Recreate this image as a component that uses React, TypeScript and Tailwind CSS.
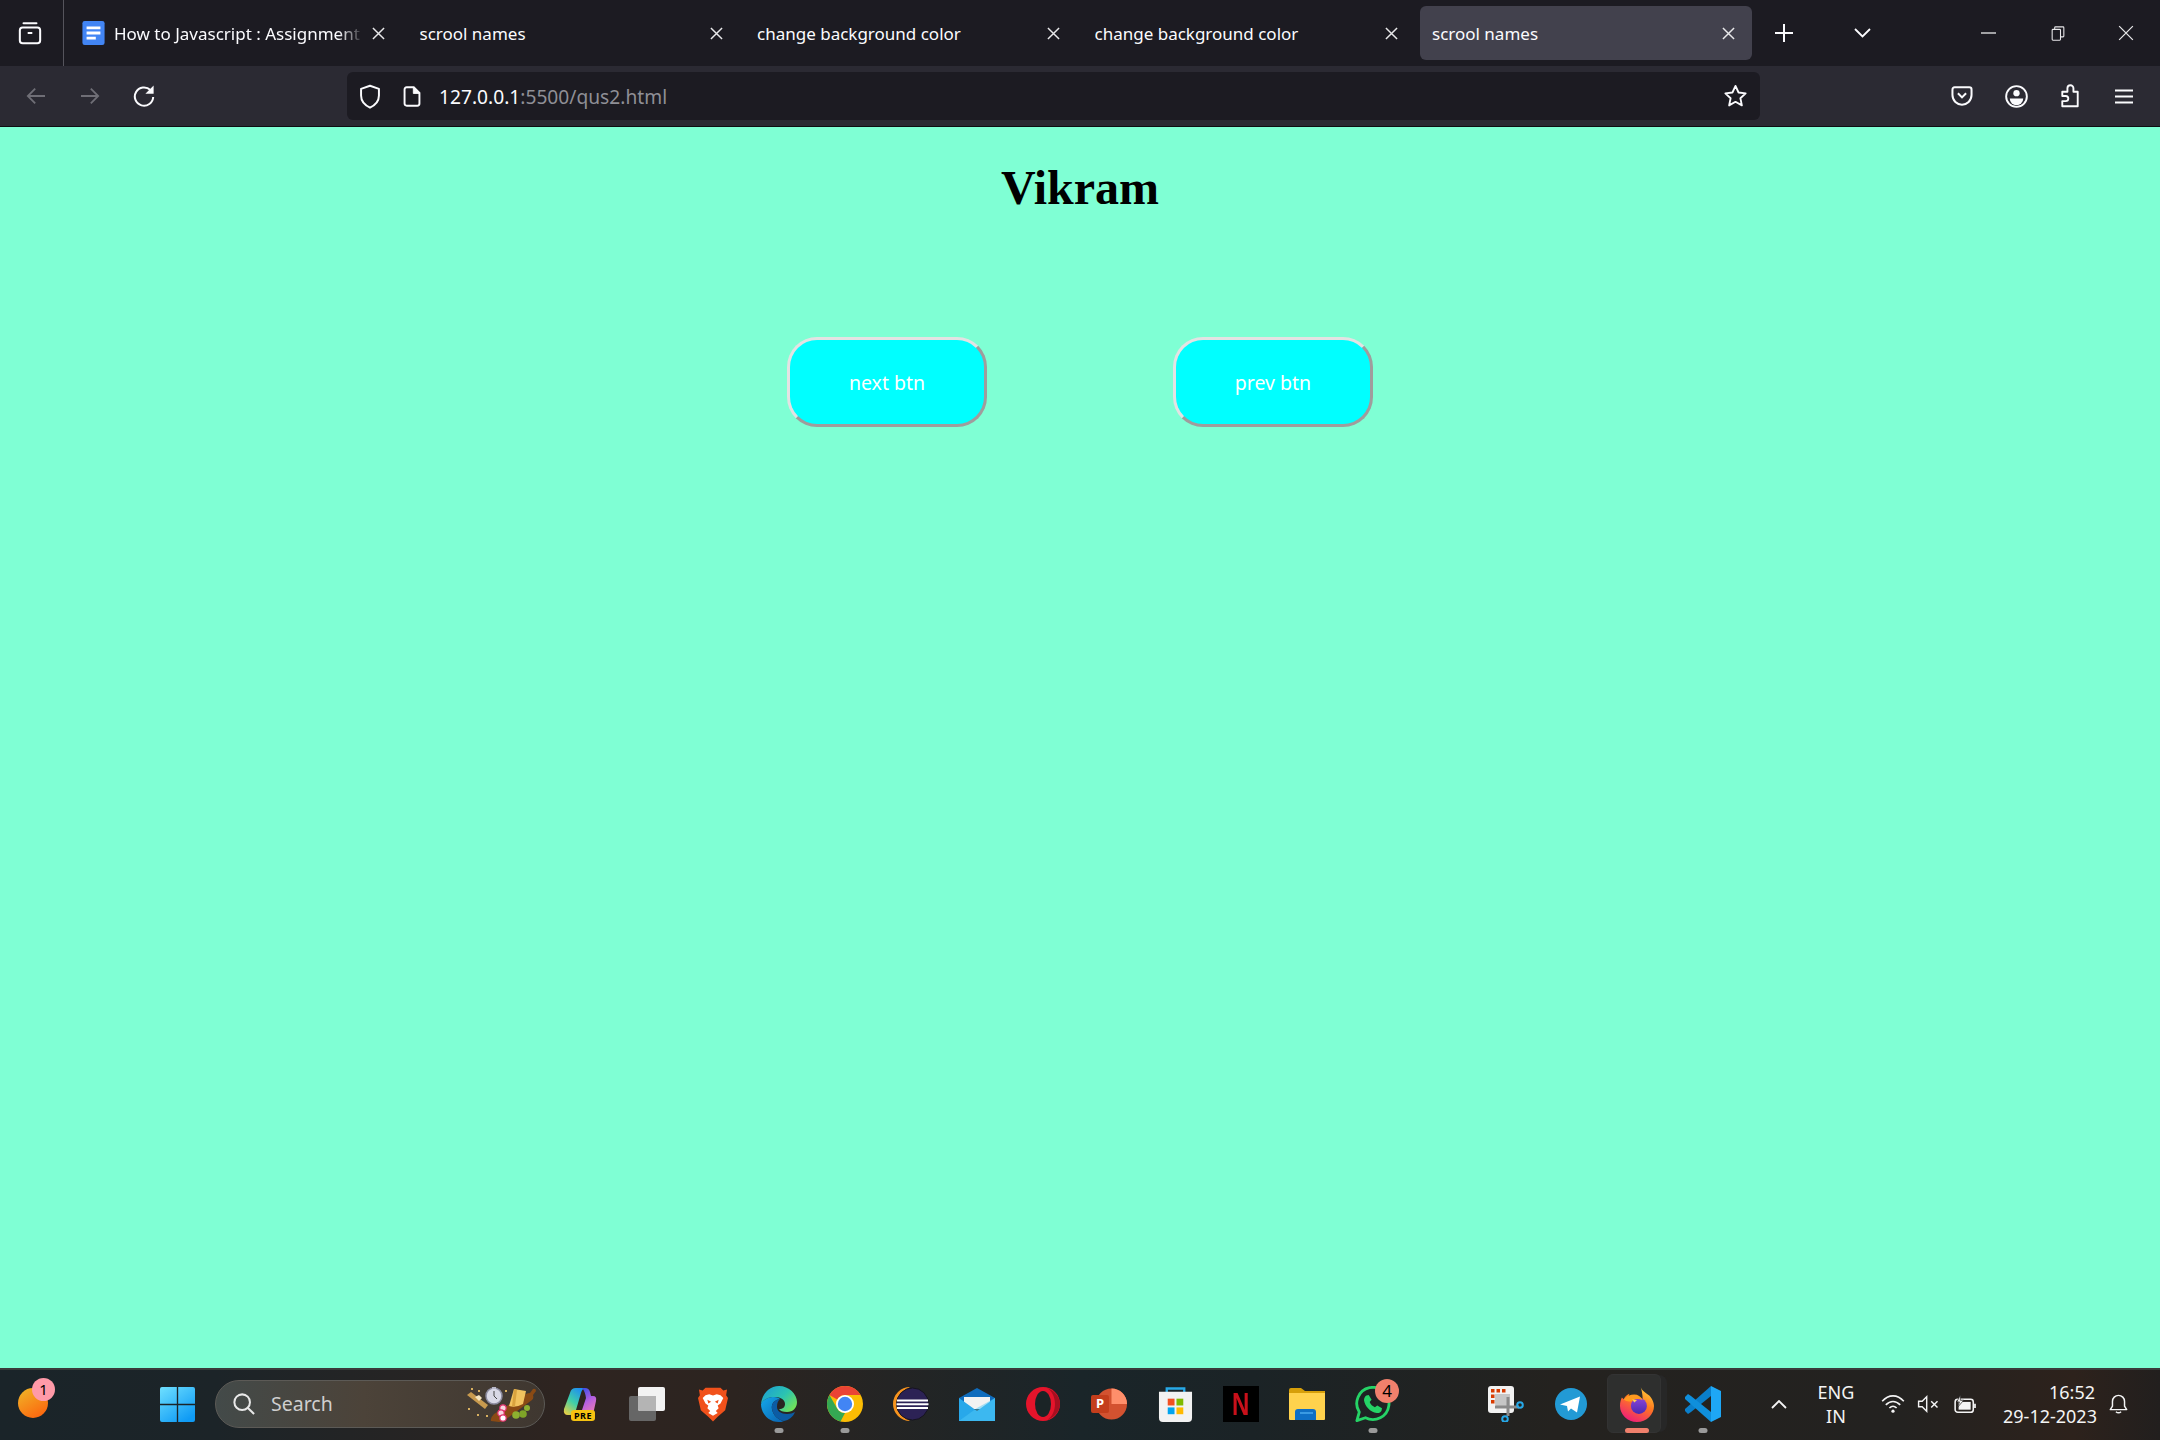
import React from 'react';

const uiFont = "font-['Noto_Sans','Open_Sans',sans-serif]";

const CloseIcon = ({ size = 13, width = 1.6 }: { size?: number; width?: number }) => (
  <svg width={size} height={size} viewBox="0 0 14 14" stroke="currentColor" strokeWidth={width} fill="none">
    <path d="M1 1l12 12M13 1L1 13" />
  </svg>
);

function Tab({ title, active, icon, fade }: { title: string; active?: boolean; icon?: boolean; fade?: boolean }) {
  return (
    <div className={`flex h-[54px] w-[332px] shrink-0 items-center rounded-[6px] pl-3 pr-[17px] ${active ? 'bg-[#42414d]' : ''}`}>
      {icon && (
        <svg width="23" height="24" viewBox="0 0 24 26" className="mr-[9px] shrink-0">
          <rect width="24" height="26" rx="2.5" fill="#4285f4" />
          <path d="M4.500 6h15v3h-15zM4.500 11.500h15v3h-15zM4.500 17h10v3h-10z" fill="#fff" />
        </svg>
      )}
      <span className={`flex-1 overflow-hidden whitespace-nowrap pt-[2px] text-[17px] text-[#fbfbfe] ${fade ? '[mask-image:linear-gradient(to_right,black_90%,transparent)]' : ''}`}>
        {title}
      </span>
      <span className="ml-2 text-[#e8e8ea]"><CloseIcon /></span>
    </div>
  );
}

function TabBar() {
  return (
    <div className="flex h-[66px] items-center bg-[#1c1b22]">
      <div className="flex h-full w-[64px] shrink-0 items-center justify-center border-r border-[#55545c] pr-[4px]">
        <svg width="24" height="24" viewBox="0 0 26 26" fill="none" stroke="#fbfbfe" strokeWidth="2.2">
          <path d="M6 2.500h14" strokeLinecap="round" />
          <rect x="2" y="7" width="22" height="17" rx="3" />
          <path d="M10.500 13h5" />
        </svg>
      </div>
      <div className="ml-[6px] flex gap-[5.5px]">
        <Tab title="How to Javascript : Assignment" icon fade />
        <Tab title="scrool names" />
        <Tab title="change background color" />
        <Tab title="change background color" />
        <Tab title="scrool names" active />
      </div>
      <svg width="18" height="18" viewBox="0 0 18 18" stroke="#fbfbfe" strokeWidth="2" className="ml-[23px] shrink-0">
        <path d="M9 0v18M0 9h18" />
      </svg>
      <svg width="17" height="10" viewBox="0 0 17 10" stroke="#fbfbfe" strokeWidth="1.800" fill="none" className="ml-[61px] shrink-0">
        <path d="M1 1l7.500 7.500L16 1" />
      </svg>
      <div className="ml-auto flex text-[#e8e8ea]">
        <div className="flex h-[44px] w-[69px] items-center justify-center">
          <svg width="15" height="2" viewBox="0 0 16 2"><path d="M0 1h16" stroke="currentColor" strokeWidth="1.4" /></svg>
        </div>
        <div className="flex h-[44px] w-[69px] items-center justify-center">
          <svg width="14" height="15" viewBox="0 0 16 18" fill="none" stroke="currentColor" strokeWidth="1.300">
            <rect x="1" y="4" width="10" height="13" rx="1" />
            <path d="M4 4V2q0-1 1-1h9q1 0 1 1v10q0 1-1 1h-3" />
          </svg>
        </div>
        <div className="flex h-[44px] w-[68px] items-center justify-center">
          <CloseIcon size={16} width={1.1} />
        </div>
      </div>
    </div>
  );
}

function ToolButton({ children }: { children: React.ReactNode }) {
  return <div className="flex h-[54px] w-[54px] shrink-0 items-center justify-center">{children}</div>;
}

function Toolbar() {
  return (
    <div className="flex h-[61px] items-center border-b border-[#0e0e12] bg-[#2b2a33] pl-[9px]">
      <ToolButton>
        <svg width="22" height="18" viewBox="0 0 24 22" fill="none" stroke="#6f6e76" strokeWidth="2.200">
          <path d="M23 11H2M11 2l-9 9 9 9" />
        </svg>
      </ToolButton>
      <ToolButton>
        <svg width="22" height="18" viewBox="0 0 24 22" fill="none" stroke="#6f6e76" strokeWidth="2.200">
          <path d="M1 11h21M13 2l9 9-9 9" />
        </svg>
      </ToolButton>
      <ToolButton>
        <svg width="22" height="22" viewBox="0 0 24 24" fill="none">
          <path d="M19 5.500A10 10 0 1 0 22 13" stroke="#fbfbfe" strokeWidth="2.200" />
          <path d="M22.500 0.500v9h-9z" fill="#fbfbfe" />
        </svg>
      </ToolButton>
      <div className="ml-[176px] flex h-[48px] w-[1413px] shrink-0 items-center rounded-[6px] bg-[#1c1b22] pl-[12px] pr-[12px]">
        <svg width="22" height="25" viewBox="0 0 24 28" fill="none" stroke="#fbfbfe" strokeWidth="2.200">
          <path d="M12 2l10 3.500V13c0 7-4.500 11-10 13.500C6.500 24 2 20 2 13V5.500z" strokeLinejoin="round" />
        </svg>
        <svg width="18" height="21" viewBox="0 0 20 24" fill="none" stroke="#fbfbfe" strokeWidth="2.200" className="ml-[22px]">
          <path d="M4 1.500h8l6.500 6.500v12q0 2.500-2.500 2.500H4q-2.500 0-2.500-2.500V4Q1.500 1.500 4 1.500z" />
          <path d="M11.500 1.500v7h7" fill="#fbfbfe" strokeWidth="1" />
        </svg>
        <span className="ml-[18px] whitespace-nowrap pt-[2px] text-[19.200px] text-[#fbfbfe]">
          127.0.0.1<span className="text-[#8f8f96]">:5500/qus2.html</span>
        </span>
        <svg width="25" height="24" viewBox="0 0 26 26" fill="none" stroke="#fbfbfe" strokeWidth="2" strokeLinejoin="round" className="ml-auto">
          <path d="M13 2l3.300 7.200 7.700.9-5.700 5.300 1.600 7.800L13 19.300l-6.900 3.900 1.600-7.800L2 10.100l7.700-.9z" />
        </svg>
      </div>
      <div className="ml-[175px] flex">
        <ToolButton>
          <svg width="22" height="20" viewBox="0 0 24 22" fill="none" stroke="#fbfbfe" strokeWidth="2.200">
            <path d="M4 1.500h16q2.500 0 2.500 2.500v6c0 6-5 10.500-10.500 10.500S1.500 16 1.500 10V4Q1.500 1.500 4 1.500z" />
            <path d="M7.500 8L12 12.500 16.500 8" />
          </svg>
        </ToolButton>
        <ToolButton>
          <svg width="23" height="23" viewBox="0 0 24 24" fill="none" stroke="#fbfbfe" strokeWidth="2">
            <circle cx="12" cy="12" r="10.800" />
            <circle cx="12" cy="8.500" r="3.300" fill="#fbfbfe" stroke="none" />
            <path d="M5 14h14a7 7 0 0 1-14 0z" fill="#fbfbfe" stroke="none" />
          </svg>
        </ToolButton>
        <ToolButton>
          <svg width="20" height="24" viewBox="0 0 22 28" fill="none" stroke="#fbfbfe" strokeWidth="2.200" strokeLinejoin="round">
            <path d="M2 9h6V5a3.500 3.500 0 0 1 7 0v4h5v17H2v-6h4a3 3 0 0 0 0-6H2z" />
          </svg>
        </ToolButton>
        <ToolButton>
          <svg width="18" height="15" viewBox="0 0 18 15" stroke="#fbfbfe" strokeWidth="1.800">
            <path d="M0 1.500h18M0 7.500h18M0 13.500h18" />
          </svg>
        </ToolButton>
      </div>
    </div>
  );
}

function PageButton({ label }: { label: string }) {
  return (
    <button className={`h-[90px] w-[200px] rounded-[30px] border-[3px] border-t-[#e3e3e3] border-l-[#e3e3e3] border-r-[#a09c9c] border-b-[#a09c9c] bg-[#00ffff] pt-[2px] text-[19.500px] text-white ${uiFont}`}>
      {label}
    </button>
  );
}

function Page() {
  return (
    <main className="flex min-h-0 flex-1 flex-col items-center bg-[#7fffd4]">
      <h1 className="mt-[33px] font-['Liberation_Serif',serif] text-[48px] font-bold leading-[55px] text-black">Vikram</h1>
      <div className="mt-[122px] flex gap-[186px]">
        <PageButton label="next btn" />
        <PageButton label="prev btn" />
      </div>
    </main>
  );
}

/* taskbar app icons */
const Copilot = () => (
  <div className="relative h-[34px] w-[36px]">
    <svg width="34" height="30" viewBox="0 0 34 30" className="absolute left-0 top-0">
      <defs>
        <linearGradient id="cpA" x1="0.700" y1="0" x2="0.100" y2="1">
          <stop offset="0" stopColor="#1f8ff0" /><stop offset="0.500" stopColor="#3fcfa8" /><stop offset="1" stopColor="#f0d040" />
        </linearGradient>
        <linearGradient id="cpB" x1="0.300" y1="0" x2="0.800" y2="1">
          <stop offset="0" stopColor="#3b4fe8" /><stop offset="0.500" stopColor="#b860e0" /><stop offset="1" stopColor="#f080b0" />
        </linearGradient>
      </defs>
      <path d="M7 6q1-5 6-5h9q-3 1-4 5l-5 17q-1 5-6 5H5q-5 0-4-6z" fill="url(#cpA)" />
      <path d="M19 1h3q4 0 5 4l1 4h2q4 0 3 5l-2 9q-1 5-6 5H15q3-1 4-5l4-12q-1-7-4-10z" fill="url(#cpB)" />
    </svg>
    <span className="absolute bottom-0 left-[8px] rounded-[3px] bg-[#f5c211] px-[3px] font-['Noto_Sans',sans-serif] text-[9px] font-bold leading-[11px] tracking-[0.5px] text-black">PRE</span>
  </div>
);

const TaskView = () => (
  <svg width="36" height="34" viewBox="0 0 36 34">
    <rect x="0" y="9" width="27" height="25" rx="2" fill="#666" />
    <rect x="9" y="0" width="27" height="24" rx="2" fill="#f2f2f2" />
    <path d="M9 9h18v15H11q-2 0-2-2z" fill="#b4b4b4" />
  </svg>
);

const Brave = () => (
  <svg width="30" height="37" viewBox="0 0 32 38">
    <path d="M8 1h16l3 3 4-1-1 6 2 3-3 13-8 7-5 5-5-5-8-7L0 12l2-3-1-6 4 1z" fill="#f1511b" />
    <path d="M8 9l4-1 4 1.500L20 8l4 1 3 3-3 6-3 2 1 3-3 3 2 2-5 3-5-3 2-2-3-3 1-3-3-2-3-6z" fill="#fff" />
    <path d="M10 14l4 2-3 2zM22 14l-4 2 3 2z" fill="#f1511b" />
  </svg>
);

const Edge = () => (
  <svg width="36" height="36" viewBox="0 0 36 36">
    <defs>
      <linearGradient id="edA" x1="0" y1="0" x2="1" y2="0.700">
        <stop offset="0" stopColor="#1a9ad8" /><stop offset="0.600" stopColor="#2cc4b0" /><stop offset="1" stopColor="#6fe05c" />
      </linearGradient>
      <linearGradient id="edB" x1="0" y1="0" x2="1" y2="1">
        <stop offset="0" stopColor="#14a8ea" /><stop offset="1" stopColor="#0a62b0" />
      </linearGradient>
    </defs>
    <path d="M0 18C1 8 8 0 18 0c10 0 18 8 18 16 0 6-4 10-10 10-4 0-7-1-8-3 4 0 6-2 6-5 0-4-4-7-10-7C7 11 2 14 0 18z" fill="url(#edA)" />
    <path d="M0 18c2-4 7-7 13-7 3 0 5 1 6 2-6 1-9 5-8 10 1 6 6 11 12 12-2 1-3 1-5 1C8 36 0 28 0 18z" fill="url(#edB)" />
    <path d="M19 13c-6 1-9 5-8 10 1 6 6 11 12 12 5-1 9-4 11-9-2 1-5 2-8 2-6 0-10-3-10-7 0-4 1-6 3-8z" fill="#0c5ca4" />
  </svg>
);

const Chrome = () => (
  <svg width="36" height="36" viewBox="0 0 40 40">
    <circle cx="20" cy="20" r="20" fill="#fbbc04" />
    <path d="M20 0a20 20 0 0 1 17.300 10H20a10 10 0 0 0-8.700 5L2.700 10A20 20 0 0 1 20 0z" fill="#ea4335" />
    <path d="M2.700 10l8.600 15a10 10 0 0 0 8.700 5L15 39.400A20 20 0 0 1 2.700 10z" fill="#34a853" />
    <circle cx="20" cy="20" r="10" fill="#fff" />
    <circle cx="20" cy="20" r="8" fill="#4285f4" />
  </svg>
);

const Eclipse = () => (
  <svg width="36" height="36" viewBox="0 0 36 36">
    <path d="M17 1a17 17 0 0 0 0 34 19 19 0 0 1 0-34z" fill="#f7941e" />
    <circle cx="19.500" cy="18" r="16" fill="#2c2255" stroke="#15131f" strokeWidth="1" />
    <path d="M4 13.500h31v2H4zM3.500 17.200h32v2h-32zM4 20.900h31v2H4z" fill="#fff" />
  </svg>
);

const Mail = () => (
  <svg width="36" height="33" viewBox="0 0 36 33">
    <path d="M0 10L18 0l18 10v4H0z" fill="#0f6cbd" />
    <path d="M5 9h26v12H5z" fill="#f2f2f2" />
    <path d="M0 10l18 13 18-13v23H0z" fill="#28a8ea" />
    <path d="M36 33H0l18-13 18-10z" fill="#50c8f5" opacity="0.500" />
  </svg>
);

const Opera = () => (
  <svg width="34" height="34" viewBox="0 0 34 34">
    <circle cx="17" cy="17" r="17" fill="#e5142b" />
    <ellipse cx="17" cy="17" rx="8" ry="13" fill="#1b2426" />
    <path d="M21 1c6 2 13 8 13 16s-7 14-13 16c5-3 8-9 8-16S26 4 21 1z" fill="#a70f20" />
  </svg>
);

const PowerPoint = () => (
  <div className="relative h-[32px] w-[36px]">
    <svg width="31" height="32" viewBox="0 0 32 32" className="absolute left-[5px] top-0">
      <circle cx="16" cy="16" r="16" fill="#d35230" />
      <path d="M16 0a16 16 0 0 1 16 16H16z" fill="#ff8f6b" />
    </svg>
    <span className="absolute left-0 top-[7px] flex h-[18px] w-[18px] items-center justify-center rounded-[2px] bg-[#c43e1c] font-['Noto_Sans',sans-serif] text-[13px] font-bold text-white">P</span>
  </div>
);

const Store = () => (
  <svg width="35" height="35" viewBox="0 0 36 36">
    <path d="M9 7V1.500h18V7" fill="none" stroke="#27a9e8" strokeWidth="2.400" />
    <path d="M1 5h34v27q0 4-4 4H5q-4 0-4-4z" fill="#f2f2f2" />
    <path d="M10 12h7v7h-7z" fill="#f25022" />
    <path d="M19 12h7v7h-7z" fill="#7fba00" />
    <path d="M10 21h7v7h-7z" fill="#00a4ef" />
    <path d="M19 21h7v7h-7z" fill="#ffb900" />
  </svg>
);

const Netflix = () => (
  <div className="flex h-[36px] w-[36px] items-center justify-center bg-black font-['Liberation_Sans',sans-serif] text-[32px] font-bold leading-none text-[#c8101a]">
    <span className="scale-x-75">N</span>
  </div>
);

const Explorer = () => (
  <svg width="36" height="32" viewBox="0 0 36 32">
    <path d="M0 2q0-2 2-2h10l4 3h20v7H0z" fill="#d69f0a" />
    <path d="M0 5h36v26q0 1-1 1H1q-1 0-1-1z" fill="#ffd24d" />
    <path d="M6 32V24q0-3 3-3h15q3 0 3 3v8z" fill="#0f6fc5" />
    <path d="M11 25h13" stroke="#4aa8ec" strokeWidth="1.500" />
  </svg>
);

const WhatsApp = () => (
  <svg width="36" height="36" viewBox="0 0 38 38" fill="none">
    <path d="M2 36.500l2.500-9A17 17 0 1 1 11 33.500z" stroke="#25d366" strokeWidth="3" strokeLinejoin="round" />
    <path d="M12 10l2.500-.5 3 5-2 2.500c1 2.500 3 4.500 5.500 5.500l2.500-2 5 3-.5 2.500c-1 2-3 3-5 2.500-7-1-12.500-7-13.500-13.500 0-2 1-4 2.500-5z" fill="#25d366" />
  </svg>
);

const Snip = () => (
  <svg width="36" height="36" viewBox="0 0 36 36" className="ml-[1px]">
    <rect x="0" y="0" width="26" height="27" rx="3" fill="#f2f2f2" />
    <path d="M3 3h3.500v3.500H3zM8.500 3H12v3.500H8.500zM14 3h3.500v3.500H14zM3 8.500h3.500V12H3zM3 14h3.500v3.500H3z" fill="#d83b01" />
    <path d="M7 8h15v13H11q-4 0-4-4z" fill="#c6c6c6" />
    <path d="M7 21h24" stroke="#8a8a8a" strokeWidth="3" />
    <path d="M20 11v19" stroke="#8a8a8a" strokeWidth="3" />
    <circle cx="32" cy="19" r="2.800" fill="none" stroke="#27a9e8" strokeWidth="2" />
    <circle cx="17" cy="33" r="2.800" fill="none" stroke="#27a9e8" strokeWidth="2" />
  </svg>
);

const Telegram = () => (
  <svg width="32" height="32" viewBox="0 0 32 32">
    <circle cx="16" cy="16" r="16" fill="#229ad5" />
    <path d="M5 16.500L25 8.500l-3 16-6-4-3 3-1-5.500-7-1.500zM12 17.500l8.500-5.500-6 6.500z" fill="#fff" />
  </svg>
);

const Firefox = () => (
  <svg width="34" height="35" viewBox="0 0 36 37">
    <defs>
      <linearGradient id="ffA" x1="0.800" y1="0" x2="0.300" y2="1">
        <stop offset="0" stopColor="#ffd23a" /><stop offset="0.450" stopColor="#ff7a1f" /><stop offset="1" stopColor="#ee1c7a" />
      </linearGradient>
      <linearGradient id="ffB" x1="0.500" y1="0" x2="0.500" y2="1">
        <stop offset="0" stopColor="#8a44d8" /><stop offset="1" stopColor="#4a2ab0" />
      </linearGradient>
    </defs>
    <path d="M22 0c1 4 5 6 9 9 4 4 5 9 5 11 0 9-8 17-18 17S0 29 0 20c0-4 1-7 2-9l2 2c1-3 3-5 6-6l-1 3c2-1 5-2 7-1 3 0 6 2 8 4 0-5-1-9-2-13z" fill="url(#ffA)" />
    <circle cx="20" cy="20" r="8.500" fill="url(#ffB)" />
    <path d="M4 13c3-3 7-5 11-5 4 0 7 2 9 6-4-2-8-2-12 1-3 1-6 0-8-2z" fill="#ff9a1f" />
    <path d="M13 13l5 1-3 2.500z" fill="#ffcf55" />
  </svg>
);

const VSCode = () => (
  <svg width="36" height="36" viewBox="0 0 36 36">
    <path d="M26 0v10L6 26l-3 2-3-3v-2z" fill="#0a7fcb" />
    <path d="M0 11v2l26 23V26L6 10 3 8z" fill="#0f8fdc" />
    <path d="M26 0l10 5v26l-10 5z" fill="#1ea7f5" />
  </svg>
);

const RunDot = () => <span className="absolute bottom-[5px] left-1/2 h-[5px] w-[9px] -translate-x-1/2 rounded-full bg-[#9a9a9a]" />;

function TaskIcon({ children, dot }: { children?: React.ReactNode; dot?: boolean }) {
  return (
    <div className="relative flex h-full w-[66px] shrink-0 items-center justify-center">
      {children}
      {dot && <RunDot />}
    </div>
  );
}

const Badge = ({ value, className }: { value: string; className: string }) => (
  <span className={`absolute flex items-center justify-center rounded-full text-black ${uiFont} ${className}`}>{value}</span>
);

function Taskbar() {
  return (
    <footer className={`flex h-[72px] shrink-0 items-stretch border-t-2 border-[#3a3b3b] bg-[linear-gradient(90deg,#1a2429_0%,#1c2428_10%,#2e2420_26%,#2c2420_34%,#1a2529_50%,#1b2326_58%,#24221f_72%,#232220_88%,#2d221c_96%,#221f1e_100%)] pb-[2px] ${uiFont}`}>
      <div className="relative w-[144px] shrink-0">
        <svg width="30" height="30" viewBox="0 0 30 30" className="ml-[18px] mt-[18px]">
          <defs>
            <linearGradient id="wgA" x1="0" y1="0" x2="0.600" y2="1">
              <stop offset="0" stopColor="#f0b828" /><stop offset="1" stopColor="#fb6a10" />
            </linearGradient>
          </defs>
          <circle cx="15" cy="15" r="15" fill="url(#wgA)" />
        </svg>
        <Badge value="1" className="left-[32px] top-[8px] h-[23px] w-[23px] bg-[#ff9aa8] text-[15px]" />
      </div>
      <div className="flex w-[66px] shrink-0 items-center justify-center">
        <svg width="35" height="35" viewBox="0 0 36 36">
          <defs>
            <linearGradient id="wnA" x1="0" y1="0" x2="0.700" y2="1">
              <stop offset="0" stopColor="#6fe0ff" /><stop offset="1" stopColor="#0f9bf5" />
            </linearGradient>
          </defs>
          <path d="M2 0h15.300v17.300H0V2q0-2 2-2zM18.700 0H34q2 0 2 2v15.300H18.700zM0 18.700h17.300V36H2q-2 0-2-2zM18.700 18.700H36V34q0 2-2 2H18.700z" fill="url(#wnA)" />
        </svg>
      </div>
      <div className="my-auto ml-[5px] flex h-[48px] w-[330px] shrink-0 items-center rounded-full border border-[#5c5a56] bg-[linear-gradient(90deg,#434a49,#4c4339_45%,#3f3730)] pl-[17px] pr-[6px]">
        <svg width="22" height="22" viewBox="0 0 24 24" fill="none" stroke="#e8e8e8" strokeWidth="2.200">
          <circle cx="10" cy="10" r="8.500" />
          <path d="M16 16l7 7" />
        </svg>
        <span className="ml-[16px] text-[19.500px] text-[#cfcfcf]">Search</span>
        <svg width="71" height="40" viewBox="0 0 71 40" className="ml-auto">
          <path d="M0 11l4-3 17 13-3 4z" fill="#c89a4e" />
          <path d="M8 13l4-2 3 3-3 3z" fill="#f5e6c0" />
          <circle cx="27" cy="12" r="8" fill="#d8d8e6" stroke="#8c8ca0" strokeWidth="1.500" />
          <path d="M27 7v5l3 3" stroke="#444" fill="none" strokeWidth="1" />
          <path d="M25 3h4v2h-4z" fill="#b8b8c8" />
          <path d="M24 37q-1-3 3-7l32-20q2-1 4-1l3-4q3-1 3 2l-3 4q1 3-1 5L38 36q-3 2-6 2z" fill="#8a4a14" />
          <path d="M42 22L47 5l12 2-3 13q-7 4-14 2z" fill="#f2c25e" />
          <path d="M47 5l-2 17 3 0 2-16z" fill="#d9a23e" />
          <circle cx="36" cy="24" r="3.200" fill="#f8d8e0" stroke="#e0306a" strokeWidth="1.200" />
          <circle cx="34" cy="29" r="3.200" fill="#f8d8e0" stroke="#e0306a" strokeWidth="1.200" />
          <circle cx="36" cy="34" r="3.200" fill="#fff" stroke="#e0306a" strokeWidth="1.200" />
          <circle cx="49" cy="31" r="3.800" fill="#8cb030" />
          <circle cx="56" cy="30" r="3.800" fill="#7ea428" />
          <circle cx="60" cy="24" r="3" fill="#8cb030" />
          <path d="M4 4h2v2H4zM11 6h2v2h-2zM1 24h2v2H1zM10 30h2v2h-2zM19 31h2v2h-2zM38 6h2v2h-2z" fill="#d8b060" />
        </svg>
      </div>
      <div className="ml-[3px] flex">
        <TaskIcon><Copilot /></TaskIcon>
        <TaskIcon><TaskView /></TaskIcon>
        <TaskIcon><Brave /></TaskIcon>
        <TaskIcon dot><Edge /></TaskIcon>
        <TaskIcon dot><Chrome /></TaskIcon>
        <TaskIcon><Eclipse /></TaskIcon>
        <TaskIcon><Mail /></TaskIcon>
        <TaskIcon><Opera /></TaskIcon>
        <TaskIcon><PowerPoint /></TaskIcon>
        <TaskIcon><Store /></TaskIcon>
        <TaskIcon><Netflix /></TaskIcon>
        <TaskIcon><Explorer /></TaskIcon>
        <TaskIcon dot>
          <WhatsApp />
          <Badge value="4" className="left-[35px] top-[9px] h-[24px] w-[24px] bg-[#f0806c] text-[17px]" />
        </TaskIcon>
        <TaskIcon />
        <TaskIcon><Snip /></TaskIcon>
        <TaskIcon><Telegram /></TaskIcon>
        <div className="relative flex h-full w-[66px] shrink-0 items-center justify-center">
          <div className="absolute bottom-[6px] left-[8px] right-[3px] top-[5px] rounded-[8px] bg-[#272727]" />
          <div className="absolute bottom-[5px] left-[3px] right-[9px] top-[4px] rounded-[6px] border border-[#333] bg-[#2e2f2e]" />
          <div className="relative"><Firefox /></div>
          <span className="absolute bottom-[5px] left-[21px] h-[5px] w-[24px] rounded-full bg-[#f0806c]" />
        </div>
        <TaskIcon dot><VSCode /></TaskIcon>
      </div>
      <div className="ml-[35px] flex items-center text-[#f4f4f4]">
        <svg width="16" height="9" viewBox="0 0 16 9" fill="none" stroke="#f4f4f4" strokeWidth="1.800">
          <path d="M1 8l7-7 7 7" />
        </svg>
        <div className="ml-[29px] w-[40px] text-center text-[18px] leading-[24px]">
          <div>ENG</div>
          <div>IN</div>
        </div>
        <svg width="24" height="18" viewBox="0 0 26 20" fill="none" stroke="#f4f4f4" strokeWidth="1.800" className="ml-[25px]">
          <path d="M1 7c7-8 17-8 24 0M5 11c5-5 11-5 16 0M9 14.500c2.500-2.500 5.500-2.500 8 0" />
          <circle cx="13" cy="18" r="1.800" fill="#f4f4f4" stroke="none" />
        </svg>
        <svg width="23" height="18" viewBox="0 0 24 20" fill="none" stroke="#f4f4f4" strokeWidth="1.600" className="ml-[12px]">
          <path d="M1 7v6h4l5 5V2L5 7z" />
          <path d="M15 7l7 7M22 7l-7 7" />
        </svg>
        <svg width="23" height="19" viewBox="0 0 26 22" fill="none" className="ml-[14px]">
          <rect x="1" y="5" width="21" height="15" rx="3" stroke="#f4f4f4" strokeWidth="1.800" />
          <path d="M5 8h14v9H5z" fill="#f4f4f4" />
          <path d="M24 10v5" stroke="#f4f4f4" strokeWidth="2" />
          <path d="M7 0L3 8h3l-2 6 7-8H7z" fill="#f4f4f4" stroke="#232220" strokeWidth="0.800" />
        </svg>
        <div className="ml-[26px] w-[92px] text-right text-[18px] leading-[24px]">
          <div>16:52</div>
          <div className="whitespace-nowrap">29-12-2023</div>
        </div>
        <svg width="19" height="22" viewBox="0 0 22 24" fill="none" stroke="#f4f4f4" strokeWidth="1.700" className="ml-[14px]">
          <path d="M1.500 18.500h19l-2.500-4V9a7 7 0 0 0-14 0v5.500z" strokeLinejoin="round" />
          <path d="M8 21q3 2.500 6 0" />
        </svg>
      </div>
    </footer>
  );
}

export default function App() {
  return (
    <div className={`flex h-screen w-screen flex-col overflow-hidden ${uiFont}`}>
      <TabBar />
      <Toolbar />
      <Page />
      <Taskbar />
    </div>
  );
}
